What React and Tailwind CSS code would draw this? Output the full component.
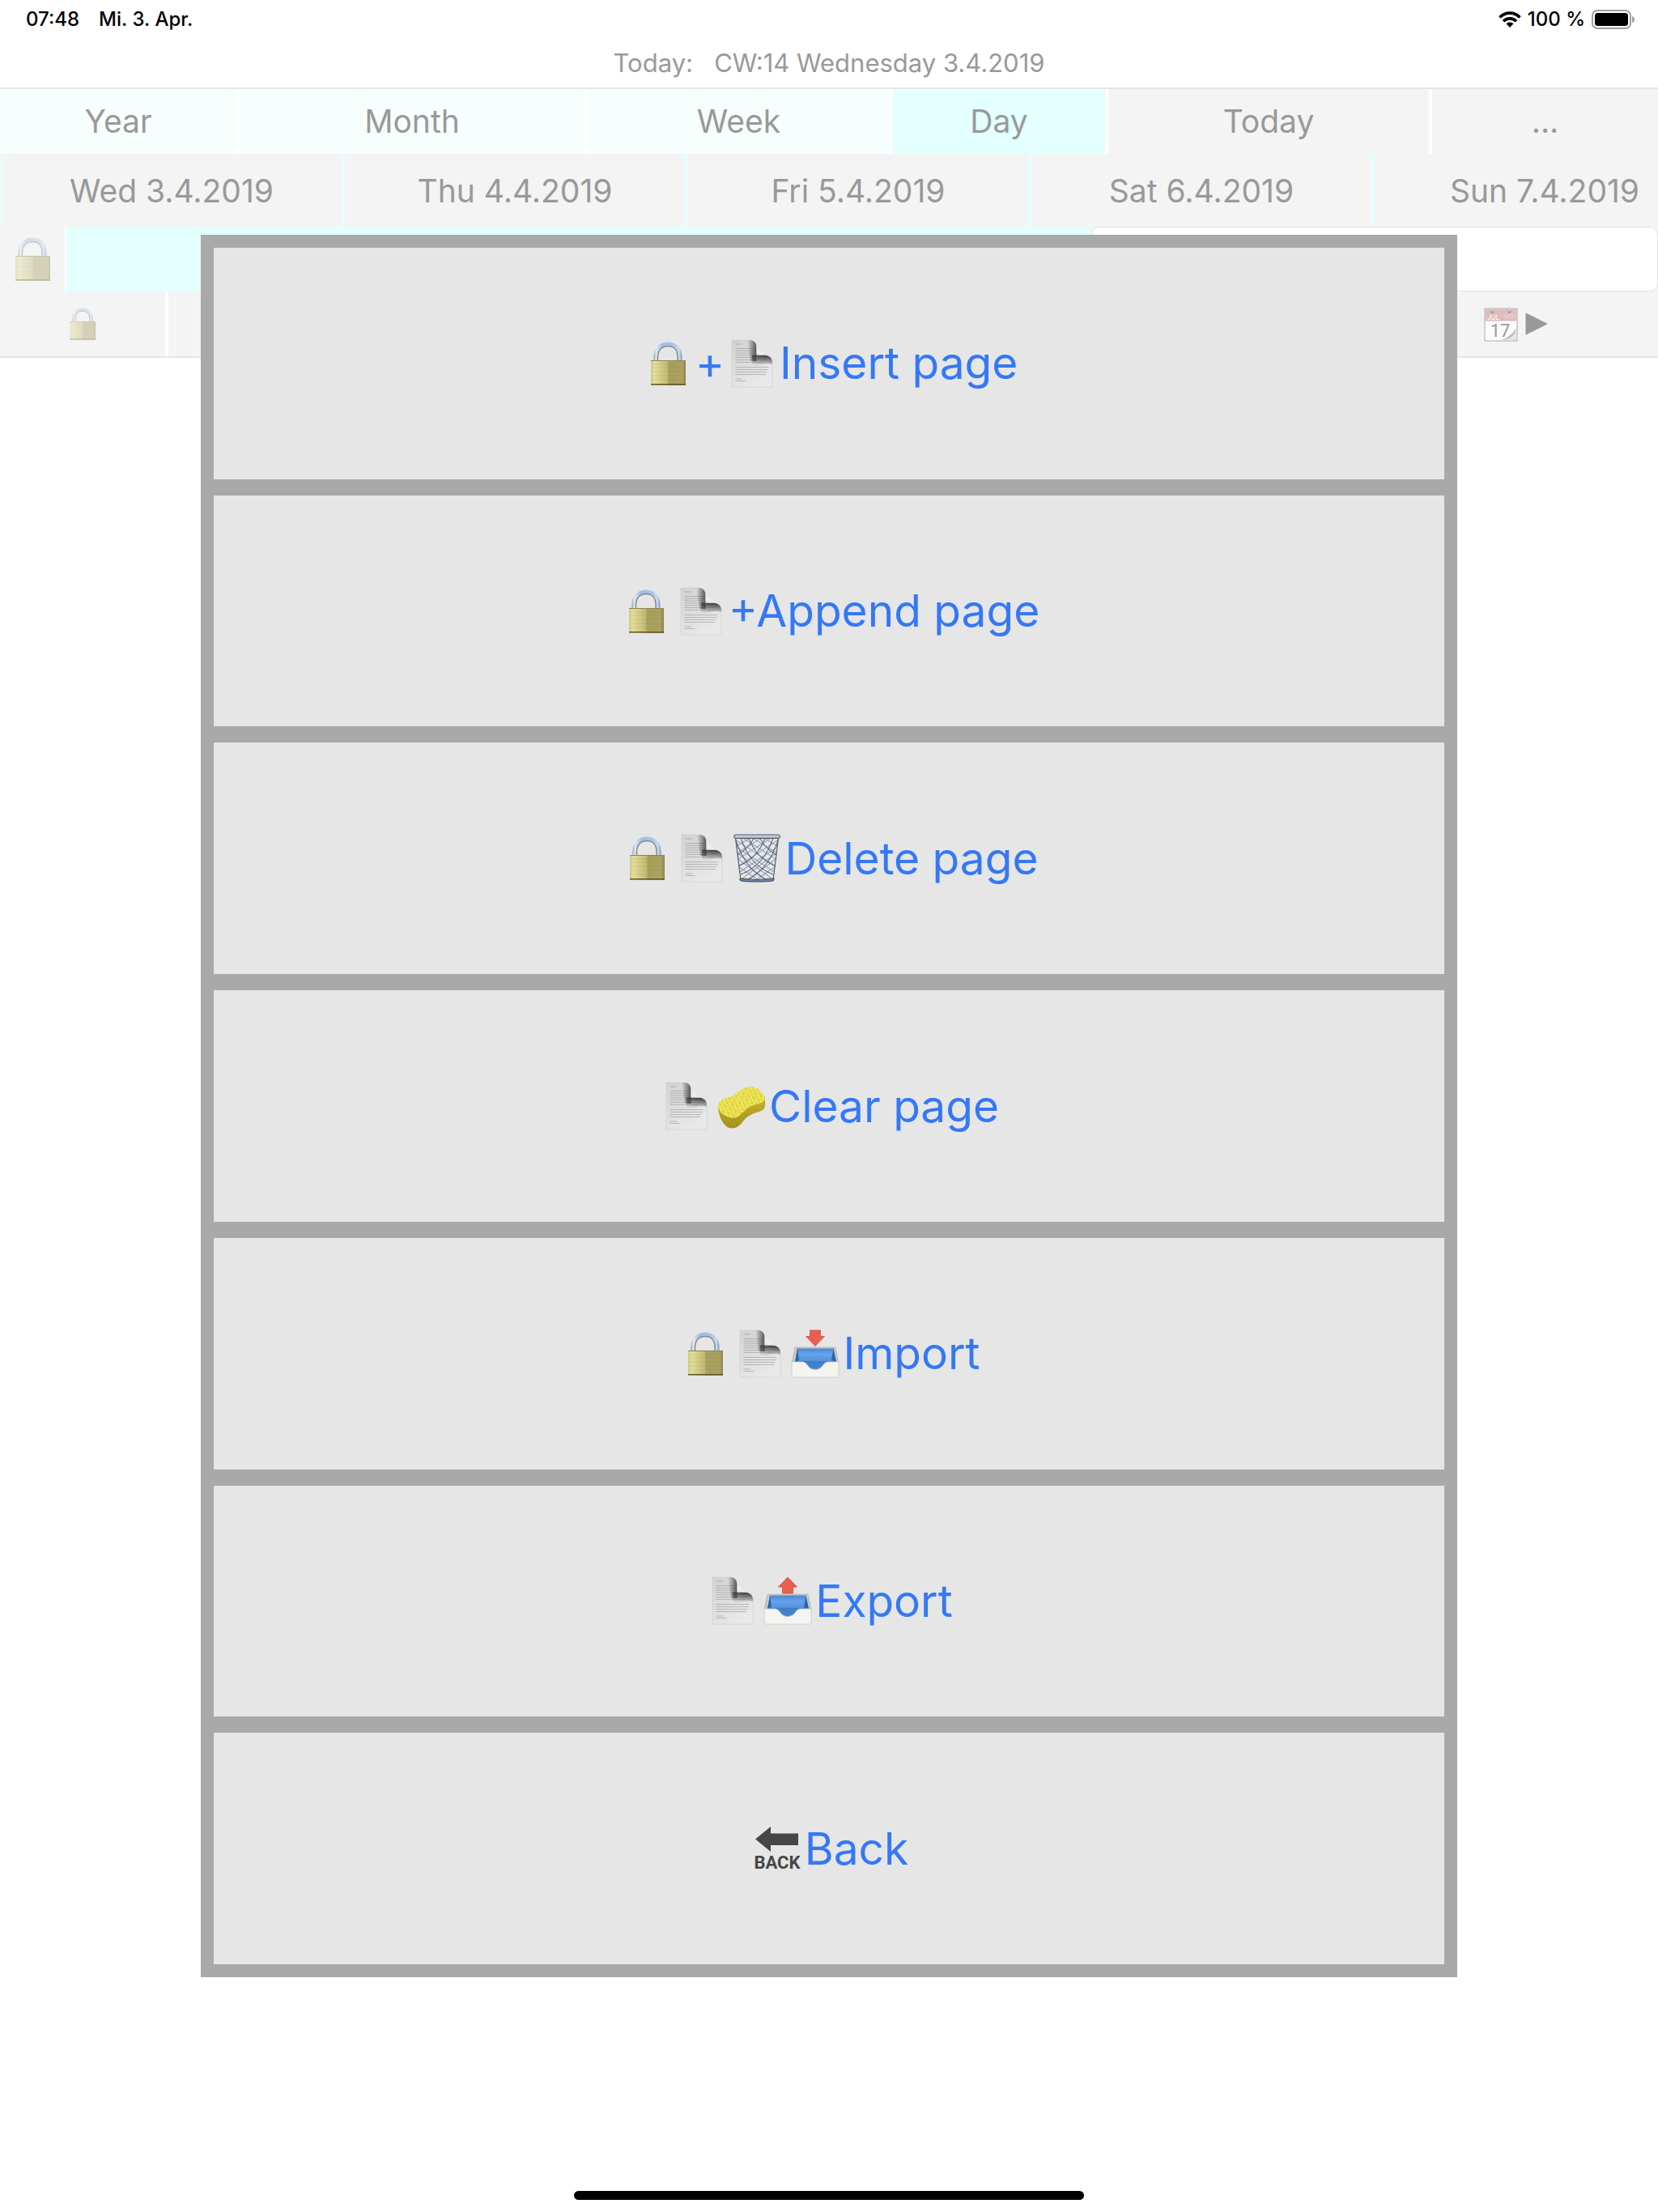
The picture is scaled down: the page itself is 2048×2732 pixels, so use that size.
import { useId } from "react";

const TABS = [
  { label: "Year", className: "w-[292px] bg-[#f7fffe]" },
  { label: "Month", className: "w-[426px] bg-[#f7fffe]" },
  { label: "Week", className: "w-[373px] bg-[#f7fffe]" },
  { label: "Day", className: "w-[262px] bg-[#e3fffe]" },
  { label: "Today", className: "w-[396px] bg-[#f4f4f4]" },
  { label: "...", className: "flex-1 bg-[#f4f4f4]" },
];

const DAYS = [
  "Wed 3.4.2019",
  "Thu 4.4.2019",
  "Fri 5.4.2019",
  "Sat 6.4.2019",
  "Sun 7.4.2019",
];

function Lock({ className }) {
  const id = useId();
  return (
    <svg viewBox="0 0 60 60" className={className} aria-hidden="true">
      <defs>
        <linearGradient id={`${id}body`}>
          <stop offset="0" stopColor="#cfcb86" />
          <stop offset="0.1" stopColor="#e2df9a" />
          <stop offset="0.47" stopColor="#c2ba72" />
          <stop offset="0.52" stopColor="#a89f5c" />
          <stop offset="0.9" stopColor="#aba263" />
          <stop offset="1" stopColor="#8f8550" />
        </linearGradient>
        <linearGradient id={`${id}arc`}>
          <stop offset="0" stopColor="#8d9db5" />
          <stop offset="0.08" stopColor="#dfe9f7" />
          <stop offset="0.3" stopColor="#9fbde8" />
          <stop offset="0.7" stopColor="#a9c4ec" />
          <stop offset="0.9" stopColor="#c9dbf4" />
          <stop offset="1" stopColor="#7f95b8" />
        </linearGradient>
      </defs>
      <path
        d="M12.5 28V22C12.5 10 20 3.5 30 3.5S47.500 10 47.500 22V28H42V22C42 13 37 9 30 9S18 13 18 22V28Z"
        fill={`url(#${id}arc)`}
      />
      <path
        d="M17.500 28V22C17.500 13 23 8.500 30 8.500S42 13 42 22V28"
        fill="none"
        stroke="#8a8573"
        strokeWidth="1.400"
      />
      <rect x="9" y="26" width="43" height="31" rx="1" fill={`url(#${id}body)`} />
      <path d="M9 26.500H52" stroke="#8d8450" strokeWidth="1" />
      <path
        d="M10 31H51M10 35H51M10 40H51M10 45H51M10 50H51"
        stroke="#7d7334"
        strokeOpacity="0.2"
        strokeWidth="0.800"
      />
      <path d="M9 55.800H52" stroke="#5f5629" strokeWidth="1.600" />
    </svg>
  );
}

function Page({ className }) {
  const id = useId();
  return (
    <svg viewBox="0 0 60 60" className={className} aria-hidden="true">
      <defs>
        <linearGradient id={`${id}sheet`} x2="0.6" y2="1">
          <stop offset="0" stopColor="#d2d2d2" />
          <stop offset="1" stopColor="#e9e9e9" />
        </linearGradient>
        <linearGradient id={`${id}left`}>
          <stop offset="0" stopColor="#444" stopOpacity="0" />
          <stop offset="1" stopColor="#3a3a3a" stopOpacity="0.85" />
        </linearGradient>
        <linearGradient id={`${id}under`} x1="0.6" y1="0" x2="0.4" y2="1">
          <stop offset="0.1" stopColor="#3a3a3a" stopOpacity="0.9" />
          <stop offset="1" stopColor="#555" stopOpacity="0" />
        </linearGradient>
        <linearGradient id={`${id}curl`} x1="0" y1="1" x2="0.6" y2="0.4">
          <stop offset="0" stopColor="#c4c4c4" />
          <stop offset="0.6" stopColor="#f0f0f0" />
          <stop offset="1" stopColor="#dedede" />
        </linearGradient>
      </defs>
      <path
        d="M5 1H27C33 1 35.500 5 35.500 10V19.500H45C51 19.500 55 23 55 29V59H5Z"
        fill={`url(#${id}sheet)`}
        stroke="#cfcfcf"
        strokeWidth="0.600"
      />
      <path
        d="M9.500 6H18M9.500 11.500H33M9.500 14.300H34M9.500 17.100H33M9.500 19.900H34M9.500 22.700H44M9.500 25.500H48M9.500 28.300H45M9.500 34.500H50M9.500 37.500H50M9.500 40.500H48M9.500 43.500H47M9.500 49H18M9.500 51.500H22"
        stroke="#8f8f8f"
        strokeOpacity="0.6"
        strokeWidth="0.900"
      />
      <path d="M24 1H27C33 1 35.500 5 35.500 10V27H28Z" fill={`url(#${id}left)`} />
      <path d="M30 19.500H45C51 19.500 55 23 55 29V31C47 28 38 33 30 33Z" fill={`url(#${id}under)`} />
      <path d="M30 1.500C38 7 49 16 54.500 24.500C52 20.500 48 19.500 45 19.500H35.500V10C35.500 6 34 3 30 1.500Z" fill={`url(#${id}curl)`} />
    </svg>
  );
}

function Trash({ className }) {
  const id = useId();
  return (
    <svg viewBox="0 0 60 60" className={className} aria-hidden="true">
      <defs>
        <clipPath id={`${id}basket`}>
          <path d="M3 5H57L50 58H10Z" />
        </clipPath>
      </defs>
      <g clipPath={`url(#${id}basket)`} fill="none">
        <path
          d="M-8 8L32 34L60 53M-4 2L58 43M8 2L58 34M20 2L60 27M34 2L60 18M-4 16L52 58M0 26L46 60M4 38L36 60M68 8L28 34L0 53M64 2L2 43M52 2L2 34M40 2L0 27M26 2L0 18M64 16L8 58M60 26L14 60M56 38L24 60"
          stroke="#8fa2bd"
          strokeWidth="1.100"
        />
        <path
          d="M4 8C12 32 24 48 44 58M10 5C18 28 30 42 50 50M20 5C26 22 38 34 54 40M34 5C38 14 46 22 56 27M56 8C48 32 36 48 16 58M50 5C42 28 30 42 10 50M40 5C34 22 22 34 6 40M26 5C22 14 14 22 4 27"
          stroke="#4a505d"
          strokeWidth="1"
        />
      </g>
      <path d="M3.500 5L10 57M56.500 5L50 57" stroke="#59616f" strokeWidth="1.200" />
      <path d="M9 55Q30 58 51 55V57Q51 59 30 59T9 57Z" fill="#6d87ac" stroke="#4b4640" strokeWidth="1" />
      <rect x="1.500" y="1" width="57" height="4.500" rx="2" fill="#9fb4d2" stroke="#5d5a5a" strokeWidth="1" />
      <path d="M4 2.500H56" stroke="#dce8f8" strokeWidth="1" />
    </svg>
  );
}

function Sponge({ className }) {
  const id = useId();
  return (
    <svg viewBox="0 0 60 60" className={className} aria-hidden="true">
      <defs>
        <pattern id={`${id}pores`} width="7" height="6" patternUnits="userSpaceOnUse" patternTransform="rotate(24)">
          <circle cx="1" cy="1" r="0.700" fill="#8c7a14" />
          <circle cx="4" cy="2.500" r="0.600" fill="#a08d1c" />
          <circle cx="2" cy="4.600" r="0.500" fill="#8c7a14" />
          <circle cx="5.800" cy="5" r="0.700" fill="#9b881b" />
        </pattern>
        <linearGradient id={`${id}side`} x2="0" y2="1">
          <stop offset="0" stopColor="#cdbb2c" />
          <stop offset="1" stopColor="#a4931d" />
        </linearGradient>
      </defs>
      <path
        d="M1 30C1 38 4 48 10 54C16 60 25 58 31 50C36 43 43 39 52 37C57 35 59 33 59 29V18L40 20Z"
        fill={`url(#${id}side)`}
      />
      <path
        d="M1 31C1 24 7 21 15 19C24 17 27 9 37 6.500C47 5 56 11 58.500 19C60 26 52 27 45 29C35 32 32 39 26 43C17 48 3 41 1 31Z"
        fill="#f2e856"
      />
      <path
        d="M1 31C1 24 7 21 15 19C24 17 27 9 37 6.500C47 5 56 11 59 19V29C59 33 57 35 52 37C43 39 36 43 31 50C25 58 16 60 10 54C4 48 1 38 1 31Z"
        fill={`url(#${id}pores)`}
      />
    </svg>
  );
}

function Tray({ className, up }) {
  const id = useId();
  return (
    <svg viewBox="0 0 60 60" className={className} aria-hidden="true">
      <defs>
        <linearGradient id={`${id}inside`} x2="0" y2="1">
          <stop offset="0" stopColor="#4c87d2" />
          <stop offset="0.25" stopColor="#64a2ee" />
          <stop offset="0.52" stopColor="#5792df" />
          <stop offset="0.56" stopColor="#3f7fc8" />
          <stop offset="1" stopColor="#4a86ce" />
        </linearGradient>
      </defs>
      {up ? (
        <path d="M30 1L41.500 13H36.500V21H23.500V13H18.500Z" fill="#e95f50" stroke="#cf4c40" strokeWidth="0.800" strokeLinejoin="round" />
      ) : (
        <path d="M23.500 1H36.500V8.500H41.500L30 20.500L18.500 8.500H23.500Z" fill="#e95f50" stroke="#cf4c40" strokeWidth="0.800" strokeLinejoin="round" />
      )}
      <path d="M5 22H55L59 41H1Z" fill="#c9c8c4" stroke="#aaa9a4" strokeWidth="0.600" />
      <path d="M8 23.500H52.500L56 40V52H5V40Z" fill={`url(#${id}inside)`} />
      <path d="M8 23.500L10 38L5 40ZM52.500 23.500L50 38L56 40Z" fill="#2d62a8" />
      <path
        d="M1 40H14C21 40 20 49.500 30 49.500S39 40 46 40H59V57Q59 59 57 59H3Q1 59 1 57Z"
        fill="#f4f4f1"
        stroke="#c8c8c3"
        strokeWidth="0.800"
      />
    </svg>
  );
}

function BackArrow({ className }) {
  return (
    <svg viewBox="0 0 60 60" className={className} aria-hidden="true">
      <path d="M3 18.500L22 3V11.500H56V26H22V34Z" fill="#464646" />
      <text
        x="30"
        y="55"
        textAnchor="middle"
        fill="#464646"
        fontSize="22"
        fontWeight="700"
        fontFamily="Roboto, sans-serif"
      >
        BACK
      </text>
    </svg>
  );
}

function Calendar({ className }) {
  return (
    <svg viewBox="0 0 44 44" className={className} aria-hidden="true">
      <rect x="2" y="3" width="40" height="40" fill="#fbfbfb" stroke="#aaa" strokeWidth="1" />
      <rect x="2.500" y="3.500" width="39" height="15" fill="#e0bcbc" />
      <path d="M26 10V15M28 10V15M30 10V15M32 9V15M34 10V15M36 9V15M38 10V15" stroke="#edd6d6" strokeWidth="0.800" />
      <text x="5" y="17" fill="#fff" fontSize="8" fontFamily="Inter, sans-serif">JUL</text>
      <text x="21" y="38" textAnchor="middle" fill="#999" fontSize="22" fontFamily="Roboto, sans-serif">17</text>
      <circle cx="11.500" cy="7" r="2" fill="#999" />
      <circle cx="32.500" cy="7" r="2" fill="#999" />
      <path d="M11.500 1V7M32.500 1V7" stroke="#cfd6de" strokeWidth="1.600" />
      <path d="M24 42C31 41 33 38 34 34C37 34 39 32 41 28V42Z" fill="#e4e4e4" />
      <path d="M22 42C31 39 37 34 41 27C39 37 33 41 22 42Z" fill="#bbb" />
    </svg>
  );
}

function Wifi() {
  return (
    <svg viewBox="0 0 28 20" className="h-5 w-7" aria-hidden="true">
      <g fill="none" stroke="#000" strokeWidth="3.600">
        <path d="M1.500 7.500C8.500 0.300 19.500 0.300 26.500 7.500" />
        <path d="M6 12.200C10.500 7.800 17.500 7.800 22 12.200" />
      </g>
      <path d="M9.500 15.300C12 13 16 13 18.500 15.300L14 20Z" />
    </svg>
  );
}

function Battery() {
  return (
    <svg viewBox="0 0 54 24" className="h-6 w-[54px]" aria-hidden="true">
      <rect x="1" y="1" width="47" height="22" rx="6" fill="none" stroke="#a0a0a0" strokeWidth="2" />
      <rect x="4" y="4" width="41" height="16" rx="3.500" />
      <path d="M50 8C54 9 54 15 50 16Z" fill="#a0a0a0" />
    </svg>
  );
}

function MenuButton({ children }) {
  return (
    <button
      type="button"
      className="flex flex-1 items-center justify-center bg-[#e6e6e6] text-[55px] leading-none text-[#3478f6]"
    >
      {children}
    </button>
  );
}

const ICON = "mx-1 size-15 shrink-0";

export default function App() {
  return (
    <div className="relative flex min-h-screen flex-col overflow-hidden bg-white font-[Inter,sans-serif] text-[#999]">
      {/* Status bar */}
      <header className="flex h-12 items-center justify-between pr-7 pl-8 text-2xl font-medium text-black">
        <div className="flex gap-6">
          <span>07:48</span>
          <span>Mi. 3. Apr.</span>
        </div>
        <div className="flex items-center gap-2">
          <Wifi />
          <span>100 %</span>
          <Battery />
        </div>
      </header>

      <p className="h-[60px] text-center text-[31px] leading-[60px] whitespace-pre">
        Today:   CW:14 Wednesday 3.4.2019
      </p>

      {/* View tabs */}
      <nav className="flex h-[82px] gap-1 border-t-2 border-[#e6e6e6] text-[39px]">
        {TABS.map((tab) => (
          <button key={tab.label} type="button" className={`${tab.className} shrink-0`}>
            {tab.label}
          </button>
        ))}
      </nav>

      {/* Days */}
      <div className="flex h-[90px] gap-1 overflow-hidden bg-[#e3fffe] pl-0.5 text-[39px]">
        {DAYS.map((day) => (
          <button key={day} type="button" className="w-[420px] shrink-0 bg-[#f4f4f4] pt-0.5">
            {day}
          </button>
        ))}
      </div>

      {/* Entry row */}
      <div className="flex h-20 bg-[#f4f4f4]">
        <button type="button" aria-label="Lock entry" className="flex w-[82px] items-center border-r-2 border-white pl-2.5">
          <Lock className="size-[60px] opacity-40" />
        </button>
        <div className="w-[1264px] bg-[#e3fffe]" />
        <input
          type="text"
          aria-label="Entry"
          className="ml-0.5 min-w-0 flex-1 rounded-[10px] border border-[#e0e0e0] bg-white px-3 text-[39px]"
        />
      </div>

      {/* Toolbar */}
      <div className="flex h-[82px] gap-1 border-b-2 border-[#e6e6e6]">
        <button type="button" aria-label="Lock page" className="flex w-[204px] items-center justify-center bg-[#f4f4f4]">
          <Lock className="size-11 opacity-40" />
        </button>
        <div className="flex flex-1 items-center justify-end bg-[#f4f4f4] pr-[136px]">
          <button type="button" aria-label="Next day" className="flex items-center gap-2">
            <Calendar className="size-11" />
            <svg viewBox="0 0 28 28" className="size-7" aria-hidden="true">
              <path d="M1 1L27 14L1 27Z" fill="#999" stroke="#999" strokeLinejoin="round" />
            </svg>
          </button>
        </div>
      </div>

      {/* Page menu */}
      <div
        role="dialog"
        aria-label="Page menu"
        className="absolute inset-x-[248px] top-[290px] flex h-[2152px] flex-col gap-5 bg-[#a9a9a9] p-4"
      >
        <MenuButton>
          <Lock className={ICON} />
          <span>+</span>
          <Page className={ICON} />
          <span>Insert page</span>
        </MenuButton>
        <MenuButton>
          <Lock className={ICON} />
          <Page className={ICON} />
          <span>+Append page</span>
        </MenuButton>
        <MenuButton>
          <Lock className={ICON} />
          <Page className={ICON} />
          <Trash className={ICON} />
          <span>Delete page</span>
        </MenuButton>
        <MenuButton>
          <Page className={ICON} />
          <Sponge className={ICON} />
          <span>Clear page</span>
        </MenuButton>
        <MenuButton>
          <Lock className={ICON} />
          <Page className={ICON} />
          <Tray className={ICON} />
          <span>Import</span>
        </MenuButton>
        <MenuButton>
          <Page className={ICON} />
          <Tray className={ICON} up />
          <span>Export</span>
        </MenuButton>
        <MenuButton>
          <BackArrow className={ICON} />
          <span>Back</span>
        </MenuButton>
      </div>

      {/* Home indicator */}
      <div className="mx-auto mt-auto mb-[15px] h-[11px] w-[630px] rounded-full bg-black" />
    </div>
  );
}
